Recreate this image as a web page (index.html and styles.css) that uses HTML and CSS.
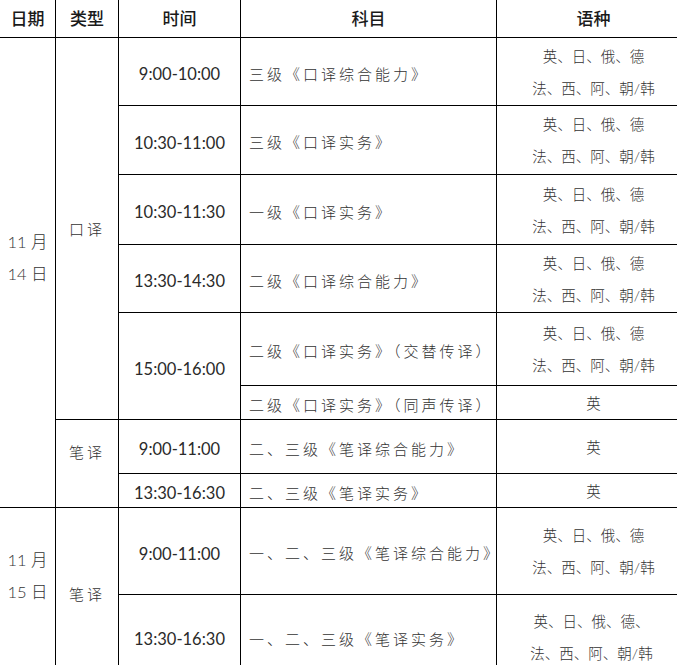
FILE: index.html
```html
<!DOCTYPE html>
<html lang="zh-CN">
<head>
<meta charset="utf-8">
<title>考试安排</title>
<link rel="stylesheet" href="styles.css">
</head>
<body>
<div class="viewport">
  <div class="sheet">
    <div class="cell head">日期</div>
    <div class="cell head">类型</div>
    <div class="cell head">时间</div>
    <div class="cell head">科目</div>
    <div class="cell head">语种</div>

    <div class="cell date date-a">11 月<br>14 日</div>
    <div class="cell type type-oral">口译</div>
    <div class="cell time">9:00-10:00</div>
    <div class="cell subj">三级《口译综合能力》</div>
    <div class="cell lang">英、日、俄、德<br>法、西、阿、朝/韩</div>

    <div class="cell time">10:30-11:00</div>
    <div class="cell subj">三级《口译实务》</div>
    <div class="cell lang">英、日、俄、德<br>法、西、阿、朝/韩</div>

    <div class="cell time">10:30-11:30</div>
    <div class="cell subj">一级《口译实务》</div>
    <div class="cell lang">英、日、俄、德<br>法、西、阿、朝/韩</div>

    <div class="cell time">13:30-14:30</div>
    <div class="cell subj">二级《口译综合能力》</div>
    <div class="cell lang">英、日、俄、德<br>法、西、阿、朝/韩</div>

    <div class="cell time span2">15:00-16:00</div>
    <div class="cell subj">二级《口译实务》（交替传译）</div>
    <div class="cell lang">英、日、俄、德<br>法、西、阿、朝/韩</div>
    <div class="cell subj">二级《口译实务》（同声传译）</div>
    <div class="cell lang">英</div>

    <div class="cell type type-write-a span2">笔译</div>
    <div class="cell time">9:00-11:00</div>
    <div class="cell subj">二、三级《笔译综合能力》</div>
    <div class="cell lang">英</div>
    <div class="cell time">13:30-16:30</div>
    <div class="cell subj">二、三级《笔译实务》</div>
    <div class="cell lang">英</div>

    <div class="cell date date-b span2">11 月<br>15 日</div>
    <div class="cell type span2">笔译</div>
    <div class="cell time">9:00-11:00</div>
    <div class="cell subj">一、二、三级《笔译综合能力》</div>
    <div class="cell lang">英、日、俄、德<br>法、西、阿、朝/韩</div>
    <div class="cell time">13:30-16:30</div>
    <div class="cell subj">一、二、三级《笔译实务》</div>
    <div class="cell lang lang-last">英、日、俄、德、<br>法、西、阿、朝/韩</div>
  </div>
</div>
</body>
</html>
```

FILE: styles.css
```css
html, body {
  margin: 0;
  padding: 0;
  background: #fff;
}

.viewport {
  width: 677px;
  height: 665px;
  overflow: hidden;
}

.sheet {
  margin: -1px 0 0 -1px;
  width: max-content;
  display: grid;
  grid-template-columns: 55px 62px 121px 255px 193px;
  grid-template-rows: 37px 67px 68px 69px 67px 72px 33px 53px 33px 86px 83px;
  gap: 1px;
  background: #000;
  border: 1px solid #000;
  font-family: "Lato", "Noto Sans CJK SC", sans-serif;
  color: #333;
}

.cell {
  background: #fff;
  display: flex;
  align-items: center;
  justify-content: center;
  text-align: center;
  font-size: 15px;
  font-weight: 300;
}

.head {
  font-family: "Noto Sans CJK SC", sans-serif;
  font-size: 17px;
  font-weight: 500;
  color: #1a1a1a;
  padding-bottom: 2px;
}

.date {
  font-size: 16.5px;
  line-height: 32px;
  padding-bottom: 30px;
}

.date-a { grid-row: span 8; }
.date-b { padding-bottom: 34px; }

.type { letter-spacing: 3px; }
.type-oral { grid-row: span 6; }
.type-write-a { padding-bottom: 24px; }

.span2 { grid-row: span 2; }

.time {
  font-size: 16.5px;
  font-weight: 400;
  color: #2a2a2a;
  padding-top: 5px;
}

.subj {
  justify-content: flex-start;
  padding-left: 8px;
  padding-top: 3px;
  letter-spacing: 3px;
  white-space: nowrap;
}

.lang {
  font-size: 14.5px;
  line-height: 32px;
  letter-spacing: 0;
  padding-top: 2px;
}

.lang-last {
  padding-right: 4px;
}
```
